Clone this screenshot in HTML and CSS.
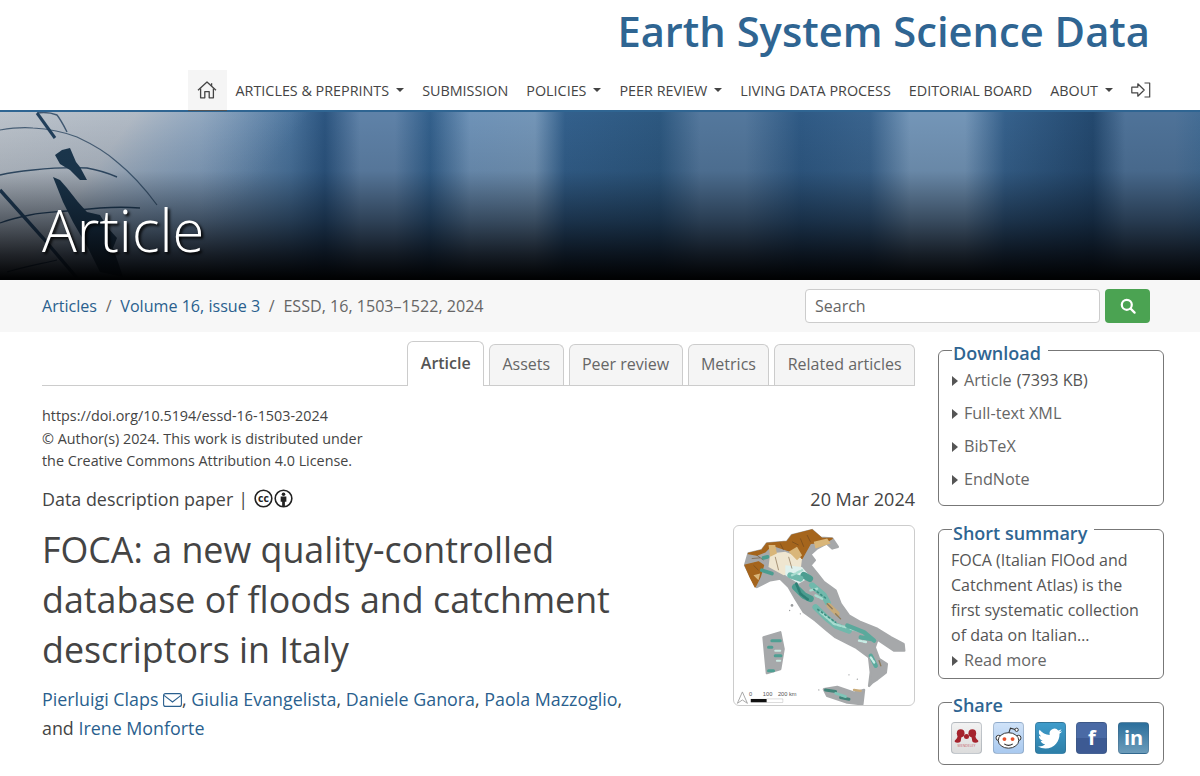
FILE: index.html
```html
<!DOCTYPE html>
<html lang="en">
  <head>
    <meta charset="UTF-8" />
    <meta name="viewport" content="width=device-width, initial-scale=1.0" />
    <title>FOCA: a new quality-controlled database of floods and catchment descriptors in Italy</title>
    <link rel="stylesheet" href="styles.css">
  </head>
  <body>
    <header class="site-header">
      <div class="site-title">Earth System Science Data</div>
      <nav class="main-nav">
        <a class="nav-item nav-home" href="#">
          <svg width="20" height="20" viewBox="0 0 20 20" fill="none" stroke="#444" stroke-width="1.3" stroke-linejoin="round">
            <path d="M1 10.2 10 2l9 8.2" />
            <path d="M14.6 3.2v2.6" />
            <path d="M3.6 8.4v9.4h4.2v-6.2h4.4v6.2h4.2V8.4" />
          </svg>
        </a>
        <a class="nav-item has-caret" href="#">Articles &amp; preprints</a>
        <a class="nav-item" href="#">Submission</a>
        <a class="nav-item has-caret" href="#">Policies</a>
        <a class="nav-item has-caret" href="#">Peer review</a>
        <a class="nav-item" href="#">Living data process</a>
        <a class="nav-item" href="#">Editorial board</a>
        <a class="nav-item has-caret" href="#">About</a>
        <a class="nav-item" href="#">
          <svg width="20" height="16" viewBox="0 0 20 16" fill="none" stroke="#444" stroke-width="1.2" stroke-linejoin="round">
            <path d="M.8 5.2h6V1.8L13.2 8l-6.4 6.2v-3.4h-6z" />
            <path d="M13.5 1h5.2v14h-5.2" />
          </svg>
        </a>
      </nav>
    </header>

    <section class="hero">
      <svg class="hero-art" viewBox="0 0 420 168" width="420" height="168">
        <defs>
          <linearGradient id="paper" x1="0" y1="0" x2="1" y2="0.3">
            <stop offset="0" stop-color="#bcc3cb" />
            <stop offset="0.3" stop-color="#b4bcc6" stop-opacity="0.95" />
            <stop offset="0.68" stop-color="#7f9dbd" stop-opacity="0" />
          </linearGradient>
          <filter id="soft"><feGaussianBlur stdDeviation="0.7" /></filter>
        </defs>
        <rect width="420" height="168" fill="url(#paper)" />
        <g filter="url(#soft)" fill="none" stroke="#24405c">
          <path d="M0 18C12 16 22 15 33 16 50 17 64 20 77 25 92 32 106 40 117 50 132 62 146 78 157 93" stroke-width="1.2" opacity="0.75" />
          <path d="M0 63C12 60 22 59 33 58 52 56 70 55 87 56 98 58 108 61 117 65" stroke-width="1.4" opacity="0.9" />
          <path d="M0 111C10 107 20 105 30 103 44 100 56 100 67 99 78 98 90 97 100 96 114 95 128 95 140 96" stroke-width="1.3" />
          <path d="M7 160C24 155 40 152 57 148" stroke-width="1.2" />
          <path d="M0 78 43 126 77 166" stroke-width="3.4" />
          <path d="M37 1 55 26" stroke-width="3" />
          <path d="M37 1C44 0 52 1 57 3 61 8 64 14 67 20" stroke-width="1.4" opacity="0.8" />
        </g>
        <g filter="url(#soft)" fill="#1d3850">
          <path d="M55 43 62 38 70 36 76 50 80 55 87 68 80 68 70 58 60 52z" />
          <path d="M53 65 60 68 67 76 78 90 87 100 100 103 108 116 117 126 113 136 118 150 123 165 100 160 88 136 73 110 63 90z" />
        </g>
      </svg>
      <h1 class="hero-title">Article</h1>
    </section>

    <div class="breadcrumb-bar">
      <div class="breadcrumbs">
        <a href="#">Articles</a><span class="crumb-sep">/</span><a href="#">Volume 16, issue 3</a><span class="crumb-sep">/</span><span class="crumb-current">ESSD, 16, 1503–1522, 2024</span>
      </div>
      <form class="search-form">
        <input class="search-input" type="text" placeholder="Search" />
        <button class="search-button" type="button" aria-label="Search">
          <svg width="16" height="16" viewBox="0 0 16 16" fill="none" stroke="#fff" stroke-width="2.2" stroke-linecap="round">
            <circle cx="6.8" cy="6.8" r="5" />
            <path d="M10.6 10.6 14.6 14.6" />
          </svg>
        </button>
      </form>
    </div>

    <div class="page-body">
      <main class="article">
        <div class="tabs">
          <a class="tab active" href="#">Article</a>
          <a class="tab" href="#">Assets</a>
          <a class="tab" href="#">Peer review</a>
          <a class="tab" href="#">Metrics</a>
          <a class="tab" href="#">Related articles</a>
        </div>

        <div class="license">
          https://doi.org/10.5194/essd-16-1503-2024<br />
          © Author(s) 2024. This work is distributed under<br />
          the Creative Commons Attribution 4.0 License.
        </div>

        <div class="article-meta">
          <div class="paper-type">
            Data description paper <span class="type-sep">|</span>
            <svg class="cc-icons" width="39" height="19" viewBox="0 0 37 18">
              <circle cx="9" cy="9" r="7.9" fill="none" stroke="#222" stroke-width="1.5" />
              <text x="9" y="12.2" text-anchor="middle" class="cc-text">cc</text>
              <circle cx="28" cy="9" r="7.9" fill="none" stroke="#222" stroke-width="1.5" />
              <circle cx="28" cy="4.9" r="1.7" fill="#222" />
              <path d="M25.3 7.2h5.4v4.9h-1.4v4h-2.6v-4h-1.4z" fill="#222" />
            </svg>
          </div>
          <div class="paper-date">20 Mar 2024</div>
        </div>

        <div class="title-row">
          <div class="title-text">
            <h2 class="paper-title">FOCA: a new quality-controlled database of floods and catchment descriptors in Italy</h2>
            <p class="authors">
              <a href="#">Pierluigi Claps</a>
              <svg class="mail-icon" width="19" height="14" viewBox="0 0 19 14" fill="none" stroke="#2a5f8e" stroke-width="1.1">
                <rect x="0.6" y="0.6" width="17.8" height="12.8" rx="2" />
                <path d="M1 2.4 9.5 9 18 2.4" />
              </svg>, <a href="#">Giulia Evangelista</a>, <a href="#">Daniele Ganora</a>, <a href="#">Paola Mazzoglio</a>,<br />
              and <a href="#">Irene Monforte</a>
            </p>
          </div>
          <figure class="thumb">
            <svg width="180" height="179" viewBox="42 33 537 534">
              <defs>
                <filter id="mapblur"><feGaussianBlur stdDeviation="1.4" /></filter>
              </defs>
              <g filter="url(#mapblur)">
                <g fill="#a6a8aa" stroke="#a6a8aa" stroke-width="7" stroke-linejoin="round">
                  <path d="M75 150 85 115 125 105 140 85 200 80 215 60 275 45 300 68 335 70 352 95 335 100 318 85 290 100 270 118 283 135 270 150 290 175 310 200 345 225 360 265 385 300 420 320 470 340 510 365 548 385 550 405 520 405 490 385 470 372 462 395 475 430 498 445 495 470 470 490 455 500 445 510 450 470 445 425 405 395 345 365 320 345 285 315 250 290 225 250 205 215 180 190 150 195 110 215 95 190z" />
                  <path d="M310 520 350 513 400 530 430 522 425 565 380 560 320 540z" />
                  <path d="M130 365 180 350 190 400 180 460 140 472 135 420z" />
                </g>
                <path fill="#efe6d0" d="M150 115 195 110 245 130 240 170 190 180 145 155z" />
                <path fill="#dff1ee" d="M195 150 245 155 270 185 235 205 195 180z" />
                <g fill="#a5651e" stroke="#a5651e" stroke-width="4" stroke-linejoin="round">
                  <path d="M85 115 125 105 140 85 200 80 215 60 275 45 305 70 335 70 320 80 270 85 245 130 235 115 200 105 185 100 155 90 135 110 110 120z" />
                  <path d="M75 150 115 140 130 150 120 185 105 215 90 185z" />
                </g>
                <path fill="#d9b679" d="M145 90 165 90 170 115 150 125zM205 110 230 95 245 120 230 135zM280 80 320 70 330 85 285 100zM100 180 120 175 115 195z" />
                <path fill="none" stroke="#5f3f1c" stroke-width="1.5" d="M110 120 130 135M180 85 190 105M240 70 250 95M100 150 115 165M165 125 175 165M205 125 215 160M95 130 120 128M215 80 235 90M260 60 270 80" />
                <g fill="none" stroke-linecap="round" stroke-linejoin="round">
                  <path stroke="#4b9d90" stroke-width="20" d="M225 215 250 240 270 250M250 180 268 190" />
                  <path stroke="#4b9d90" stroke-width="11" d="M130 128 142 125M125 165 155 175" />
                  <path stroke="#2f7f74" stroke-width="8" stroke-dasharray="9 5" d="M228 205 240 235 262 252" />
                  <path stroke="#6fb9ac" stroke-width="18" d="M275 210 310 240 322 262M285 275 315 305 345 330 385 345M240 190 210 180" />
                  <path stroke="#a8dcd0" stroke-width="7" stroke-dasharray="10 6" d="M285 240 305 250M300 290 340 325 375 335M390 340 430 350M215 180 245 165M270 225 290 220" />
                  <path stroke="#3f8f83" stroke-width="5" stroke-dasharray="4 9" d="M280 222 318 250M292 282 345 320" />
                  <path stroke="#5aa99c" stroke-width="13" d="M380 330 430 350 460 375M420 365 450 370M450 420 465 450" />
                  <path stroke="#c8ece5" stroke-width="7" stroke-dasharray="8 5" d="M415 375 440 380M450 425 460 440" />
                  <path stroke="#c9ab79" stroke-width="15" d="M325 270 350 295" />
                  <path stroke="#8d7a5a" stroke-width="4" d="M320 265 335 280M345 295 360 310M475 435 480 450" />
                  <path stroke="#4f9f93" stroke-width="9" d="M155 375 180 375M145 395 155 395M165 420 182 420M145 465 160 465" />
                  <path stroke="#cde9e3" stroke-width="6" d="M165 405 180 405M170 435 180 435" />
                  <path stroke="#3f8378" stroke-width="9" d="M315 522 345 527M360 545 385 550" />
                  <path stroke="#7fc5b8" stroke-width="8" d="M345 532 375 542" />
                  <path stroke="#c9ab79" stroke-width="7" d="M400 522 420 525" />
                </g>
                <g fill="#9a9c9e">
                  <circle cx="215" cy="270" r="4" /><circle cx="240" cy="295" r="2" /><circle cx="208" cy="285" r="2" />
                  <circle cx="385" cy="477" r="2" /><circle cx="410" cy="490" r="2" /><circle cx="295" cy="522" r="2" />
                </g>
              </g>
              <g fill="#555">
                <text x="87" y="540" class="map-scale">0</text>
                <text x="128" y="540" class="map-scale">100</text>
                <text x="173" y="540" class="map-scale">200 km</text>
              </g>
              <rect x="92" y="549" width="48" height="10" fill="#111" />
              <rect x="140" y="549" width="48" height="10" fill="#fff" stroke="#999" />
              <path d="M52 562 67 528 82 562 67 552z" fill="#fff" stroke="#999" stroke-width="2.5" stroke-linejoin="round" />
            </svg>
          </figure>
        </div>
      </main>

      <aside class="sidebar">
        <fieldset class="side-box box-download">
          <legend>Download</legend>
          <ul class="side-links">
            <li><a href="#">Article</a> <span class="file-size">(7393 KB)</span></li>
            <li><a href="#">Full-text XML</a></li>
            <li><a href="#">BibTeX</a></li>
            <li><a href="#">EndNote</a></li>
          </ul>
        </fieldset>

        <fieldset class="side-box box-summary">
          <legend>Short summary</legend>
          <p class="summary">FOCA (Italian FlOod and Catchment Atlas) is the first systematic collection of data on Italian…</p>
          <a class="read-more" href="#">Read more</a>
        </fieldset>

        <fieldset class="side-box box-share">
          <legend>Share</legend>
          <div class="share-icons">
            <a class="share-icon share-mendeley" href="#" aria-label="Mendeley">
              <svg width="31" height="31" viewBox="0 0 32 32">
                <g fill="#a5232d">
                  <circle cx="10" cy="10.5" r="4" /><circle cx="22" cy="10.5" r="4" />
                  <circle cx="16" cy="14" r="2.6" />
                  <path d="M7 12.5c-.2 3-1.600 4.600-3 5.600-.8 1 .2 2.200 2.800 2.200 2.400 0 3.400-1 3.400-2.400 0-2 1.400-4 1-5.400zM25 12.500c.2 3 1.600 4.600 3 5.600.8 1-.2 2.200-2.800 2.200-2.400 0-3.400-1-3.400-2.400 0-2-1.400-4-1-5.400z" />
                </g>
                <text x="16" y="25" text-anchor="middle" class="mendeley-text">MENDELEY</text>
              </svg>
            </a>
            <a class="share-icon share-reddit" href="#" aria-label="Reddit">
              <svg width="31" height="31" viewBox="0 0 32 32">
                <path d="M16 11 18 5.4 23 6.600" fill="none" stroke="#333" stroke-width="1.1" />
                <circle cx="24.4" cy="7" r="1.7" fill="#fff" stroke="#333" />
                <circle cx="5.8" cy="15.4" r="2.7" fill="#fff" stroke="#333" />
                <circle cx="26.2" cy="15.4" r="2.7" fill="#fff" stroke="#333" />
                <ellipse cx="16" cy="18" rx="10.6" ry="8" fill="#fff" stroke="#333" />
                <circle cx="11.8" cy="16.6" r="2" fill="#e8502a" />
                <circle cx="20.2" cy="16.6" r="2" fill="#e8502a" />
                <path d="M11.6 21.6c2.600 1.800 6.200 1.800 8.800 0" fill="none" stroke="#333" stroke-width="1.1" />
              </svg>
            </a>
            <a class="share-icon share-twitter" href="#" aria-label="Twitter">
              <svg width="31" height="31" viewBox="0 0 32 32">
                <path fill="#fff" d="M28 8.400c-1 .5-2 .7-3 .9 1-.6 1.900-1.700 2.300-2.900-1 .6-2.100 1-3.300 1.300A5.100 5.100 0 0 0 15.200 12.300C11 12.100 7.200 10 4.700 6.900c-1.400 2.400-.7 5.400 1.600 6.900-.8 0-1.600-.2-2.300-.6 0 2.500 1.700 4.600 4.100 5.100-.8.200-1.500.2-2.300.1.700 2.100 2.600 3.500 4.800 3.500C8.400 23.600 5.700 24.400 3 24.100c2.300 1.500 5 2.300 7.800 2.300 9.500 0 14.800-8 14.500-15.200 1-.7 1.900-1.700 2.700-2.800z" />
              </svg>
            </a>
            <a class="share-icon share-facebook" href="#" aria-label="Facebook">
              <span class="share-letter">f</span>
            </a>
            <a class="share-icon share-linkedin" href="#" aria-label="LinkedIn">
              <span class="share-letter">in</span>
            </a>
          </div>
        </fieldset>
      </aside>
    </div>
  </body>
</html>
```

FILE: styles.css
```css
* {
  box-sizing: border-box;
}

html,
body {
  height: 776px;
  overflow: hidden;
}

body {
  margin: 0;
  font-family: "Open Sans", sans-serif;
  color: #444;
  background-color: #fff;
}

a {
  color: #2a5f8e;
  text-decoration: none;
}

/* header */

.site-title {
  height: 70px;
  padding: 3px 50px 0 0;
  text-align: right;
  font-size: 41.7px;
  line-height: 56px;
  font-weight: 600;
  color: #2f6592;
}

.main-nav {
  display: flex;
  justify-content: flex-end;
  height: 42px;
  padding-right: 40px;
  border-bottom: 2px solid #2f6592;
}

.nav-item {
  display: flex;
  align-items: center;
  padding: 0 9px;
  height: 40px;
  font-size: 14.35px;
  color: #444;
  text-transform: uppercase;
}

.nav-home {
  width: 39px;
  justify-content: center;
  padding: 0;
  background-color: #f5f5f5;
  border-bottom: 1px solid #555;
  height: 41px;
}

.has-caret::after {
  content: "";
  margin-left: 7px;
  border-top: 4.5px solid #444;
  border-left: 4.5px solid transparent;
  border-right: 4.5px solid transparent;
}

/* banner */

.hero {
  position: relative;
  height: 168px;
  overflow: hidden;
  background: linear-gradient(to right,
    #7f9dbd 0, #7f9dbd 200px, #4a739c 290px, #2c5580 325px, #5f82a8 360px, #5f82a8 395px, #33608c 430px,
    #6f93b8 470px, #7496b8 535px, #33608c 565px, #2d5880 660px, #54789d 700px, #54789d 745px, #2f5a85 800px,
    #3a648e 870px, #7496b8 910px, #7496b8 965px, #36618c 1005px, #24496f 1093px, #4f7399 1125px, #4f7399 1175px, #446d95 1200px);
}

.hero::after {
  content: "";
  position: absolute;
  top: 0;
  left: 0;
  right: 0;
  bottom: 0;
  background: linear-gradient(to bottom, rgba(6, 12, 20, 0) 0%, rgba(6, 12, 20, 0.1) 35%, rgba(6, 12, 20, 0.55) 65%, rgba(4, 6, 10, 0.84) 85%, #010203 99%);
}

.hero-art {
  position: absolute;
  left: 0;
  top: 0;
}

.hero-title {
  position: absolute;
  z-index: 1;
  left: 42px;
  bottom: 14px;
  margin: 0;
  font-size: 58px;
  line-height: 72px;
  font-weight: 300;
  color: #fff;
  text-shadow: 2px 2px 3px #000;
}

/* breadcrumbs and search */

.breadcrumb-bar {
  display: flex;
  justify-content: space-between;
  align-items: center;
  height: 52px;
  padding: 0 50px 0 42px;
  background-color: #f7f7f7;
}

.breadcrumbs {
  font-size: 16.1px;
  color: #666;
}

.crumb-sep {
  margin: 0 8.7px;
}

.search-form {
  display: flex;
  gap: 5px;
  height: 34px;
}

.search-input {
  width: 295px;
  padding: 0 9px;
  border: 1px solid #ccc;
  border-radius: 4px;
  font-family: inherit;
  font-size: 16px;
  color: #666;
  background-color: #fff;
}

.search-input::placeholder {
  color: #666;
}

.search-button {
  display: flex;
  align-items: center;
  justify-content: center;
  width: 45px;
  padding: 0;
  border: none;
  border-radius: 4px;
  background-color: #4ba352;
}

/* page columns */

.page-body {
  display: flex;
  padding: 0 36px 0 42px;
  gap: 23px;
}

.article {
  width: 873px;
}

.sidebar {
  display: flex;
  flex-direction: column;
  gap: 10.5px;
  width: 226px;
  padding-top: 5px;
}

/* tabs */

.tabs {
  display: flex;
  justify-content: flex-end;
  align-items: flex-end;
  gap: 5px;
  height: 54px;
  border-bottom: 1px solid #ccc;
}

.tab {
  display: flex;
  align-items: center;
  height: 41px;
  padding: 0 12.4px 3px;
  border: 1px solid #ccc;
  border-bottom: none;
  border-radius: 6px 6px 0 0;
  font-size: 16px;
  color: #666;
  background-color: #f5f5f5;
}

.tab.active {
  height: 45px;
  margin-bottom: -1px;
  font-weight: 600;
  color: #555;
  background-color: #fff;
}

.license {
  margin-top: 19px;
  font-size: 14.35px;
  line-height: 22.5px;
  color: #444;
}

.article-meta {
  display: flex;
  justify-content: space-between;
  align-items: center;
  margin-top: 13px;
  height: 26px;
  font-size: 18px;
  color: #444;
}

.paper-type {
  display: flex;
  align-items: center;
  gap: 5px;
  font-size: 17.9px;
}

.cc-icons {
  display: block;
  margin-left: 1px;
}

.cc-text {
  font-size: 10px;
  font-weight: 700;
  fill: #222;
}

.title-row {
  display: flex;
  justify-content: space-between;
  margin-top: 13px;
}

.title-text {
  width: 680px;
}

.paper-title {
  margin: -1px 0 0;
  width: 600px;
  font-size: 35.8px;
  line-height: 50px;
  font-weight: 400;
  color: #444;
}

.authors {
  margin: 11px 0 0;
  font-size: 17.85px;
  line-height: 29px;
  color: #444;
}

.mail-icon {
  vertical-align: -1px;
}

.thumb {
  width: 182px;
  height: 181px;
  margin: 0;
  border: 1px solid #ccc;
  border-radius: 6px;
}

.thumb svg {
  display: block;
}

.map-scale {
  font-size: 17px;
  font-family: "Liberation Sans", sans-serif;
}

/* sidebar boxes */

.side-box {
  margin: 0;
  padding: 0 12px;
  border: 1px solid #777;
  border-radius: 6px;
  min-width: 0;
}

.side-box legend {
  margin-left: 1px;
  padding: 6px 7px 0 1px;
  font-size: 18px;
  line-height: 20px;
  font-weight: 600;
  color: #2f6592;
}

.box-download {
  padding-bottom: 10px;
}

.box-summary {
  padding-top: 5px;
  padding-bottom: 5px;
}

.box-share {
  padding: 7px 14px 10px 12px;
}

.side-links {
  margin: 0;
  padding: 0;
  list-style: none;
  font-size: 16.2px;
}

.side-links li {
  display: flex;
  gap: 5px;
  height: 33px;
  align-items: center;
  color: #555;
}

.side-links a::before,
.read-more::before {
  content: "";
  display: inline-block;
  margin-right: 6px;
  border-left: 6px solid #555;
  border-top: 5.5px solid transparent;
  border-bottom: 5.5px solid transparent;
}

.side-links a,
.read-more {
  margin-left: 1px;
  color: #666;
}

.summary {
  margin: 0;
  font-size: 16px;
  line-height: 25px;
  color: #555;
}

.read-more {
  display: block;
  font-size: 16.2px;
  line-height: 25px;
}

.share-icons {
  display: flex;
  justify-content: space-between;
}

.share-icon {
  display: flex;
  align-items: center;
  justify-content: center;
  width: 31px;
  height: 32px;
  border-radius: 4px;
  border: 1px solid rgba(60, 80, 100, 0.25);
  overflow: hidden;
}

.share-icon svg {
  flex: none;
}

.mendeley-text {
  font-size: 3.6px;
  fill: #c9636b;
}

.share-mendeley {
  background: linear-gradient(to bottom, #f2f2f2, #dcdcdc);
}

.share-reddit {
  background: linear-gradient(to bottom, #cfe2f8, #a9c9ef);
}

.share-twitter {
  background: linear-gradient(to bottom, #3f9ccb, #2d7fa8);
}

.share-facebook {
  background: linear-gradient(to bottom, #4a6aa5 50%, #3d5a93 50%);
}

.share-linkedin {
  background: linear-gradient(to bottom, #2b6f9c, #6c9cba);
}

.share-letter {
  font-size: 20px;
  font-weight: 700;
  color: #fff;
  line-height: 1;
}
```
